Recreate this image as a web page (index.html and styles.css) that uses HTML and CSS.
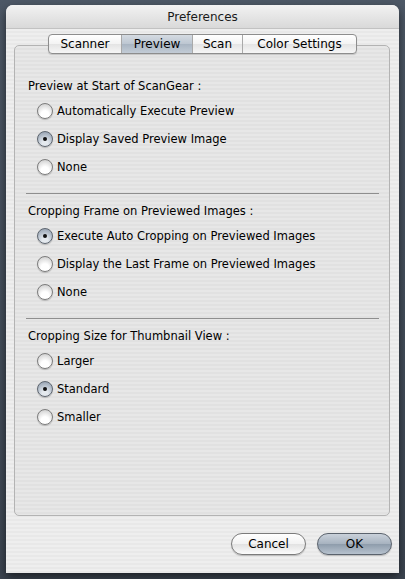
FILE: index.html
```html
<!DOCTYPE html>
<html>
<head>
<meta charset="utf-8">
<link rel="stylesheet" href="styles.css">
</head>
<body>
<div class="window">
  <div class="titlebar">Preferences</div>
  <div class="tabs">
    <div class="tab t-scanner">Scanner</div>
    <div class="tab t-preview active">Preview</div>
    <div class="tab t-scan">Scan</div>
    <div class="tab t-color">Color Settings</div>
  </div>
  <div class="group">
    <div class="section">
      <div class="heading">Preview at Start of ScanGear :</div>
      <div class="option"><span class="radio"></span>Automatically Execute Preview</div>
      <div class="option"><span class="radio on"></span>Display Saved Preview Image</div>
      <div class="option"><span class="radio"></span>None</div>
    </div>
    <div class="sep"></div>
    <div class="section">
      <div class="heading">Cropping Frame on Previewed Images :</div>
      <div class="option"><span class="radio on"></span>Execute Auto Cropping on Previewed Images</div>
      <div class="option"><span class="radio"></span>Display the Last Frame on Previewed Images</div>
      <div class="option"><span class="radio"></span>None</div>
    </div>
    <div class="sep"></div>
    <div class="section">
      <div class="heading">Cropping Size for Thumbnail View :</div>
      <div class="option"><span class="radio"></span>Larger</div>
      <div class="option"><span class="radio on"></span>Standard</div>
      <div class="option"><span class="radio"></span>Smaller</div>
    </div>
  </div>
  <div class="buttons">
    <div class="btn">Cancel</div>
    <div class="btn default">OK</div>
  </div>
</div>
</body>
</html>
```
FILE: styles.css
```css
html, body {
  margin: 0;
  padding: 0;
}
body {
  width: 405px;
  height: 579px;
  overflow: hidden;
  background: linear-gradient(#4d5866, #3c4551);
  font-family: "DejaVu Sans", "Liberation Sans", sans-serif;
  font-size: 11.5px;
  color: #000;
}
.window {
  margin: 5px 6px 0 6px;
  width: 393px;
  height: 568px;
  border-radius: 7px 7px 0 0;
  background: repeating-linear-gradient(#eeeeee 0 2px, #e8e8e8 2px 4px);
  box-shadow: 0 4px 10px rgba(0,0,0,0.55);
  display: flex;
  flex-direction: column;
  overflow: hidden;
}
.titlebar {
  height: 23px;
  line-height: 24px;
  text-align: center;
  font-size: 12px;
  background: linear-gradient(#f2f2f2, #d9d9d9);
  border-bottom: 1px solid #c2c2c2;
  color: #1a1a1a;
}
.tabs {
  position: relative;
  z-index: 1;
  align-self: flex-start;
  margin: 5px 0 0 42px;
  display: flex;
  height: 18px;
  border: 1px solid #8d8d8d;
  border-radius: 4px;
  background: linear-gradient(#ffffff, #f3f3f3 50%, #e4e4e4 51%, #f6f6f6);
  box-shadow: 0 1px 1px rgba(0,0,0,0.15);
  overflow: hidden;
}
.tab {
  line-height: 18px;
  font-size: 12px;
  text-align: center;
  border-left: 1px solid #a9a9a9;
  box-sizing: border-box;
}
.tab:first-child {
  border-left: none;
}
.t-scanner { width: 72px; }
.t-preview { width: 71px; }
.t-scan { width: 50px; }
.t-color { width: 114px; }
.tab.active {
  background: linear-gradient(#d5dbe2, #bcc6d1 50%, #a9b5c2 51%, #c3ccd6);
}
.group {
  margin: -9px 9px 0 8px;
  height: 471px;
  border: 1px solid #b3b3b3;
  border-radius: 5px;
  background: repeating-linear-gradient(#e7e7e7 0 2px, #e1e1e1 2px 4px);
  padding: 30px 10px 0 11px;
  box-sizing: border-box;
}
.heading {
  padding-left: 2px;
  line-height: 20px;
  margin-bottom: 1px;
}
.option {
  display: flex;
  align-items: center;
  padding-left: 11px;
  height: 28px;
}
.radio {
  width: 14px;
  height: 14px;
  border-radius: 50%;
  border: 1px solid #7c7c7c;
  background: radial-gradient(circle at 50% 75%, #ffffff 30%, #e6e6e6 60%, #c4c4c4 100%);
  margin-right: 4px;
  position: relative;
  flex: none;
  box-shadow: 0 1px 1px rgba(0,0,0,0.2);
}
.radio.on {
  background: radial-gradient(circle at 50% 80%, #e4e9ee 20%, #b5bfcb 60%, #8a97a7 100%);
  border-color: #5e6670;
}
.radio.on::after {
  content: "";
  position: absolute;
  left: 5px;
  top: 5px;
  width: 4px;
  height: 4px;
  border-radius: 50%;
  background: #111;
}
.sep {
  height: 1px;
  background: #8f8f8f;
  margin: 12px 0 7px 0;
}
.buttons {
  display: flex;
  justify-content: flex-end;
  gap: 11px;
  margin: 17px 7px 0 0;
}
.btn {
  width: 73px;
  height: 20px;
  line-height: 20px;
  text-align: center;
  border: 1px solid #7b7b7b;
  border-radius: 11px;
  font-size: 12px;
  background: linear-gradient(#ffffff, #f2f2f2 50%, #e2e2e2 51%, #fbfbfb);
  box-shadow: 0 1px 1px rgba(0,0,0,0.2);
}
.btn.default {
  border-color: #5b636d;
  background: linear-gradient(#c9d1da, #a6b2bf 50%, #8e9cab 51%, #b7c2ce);
}
```
